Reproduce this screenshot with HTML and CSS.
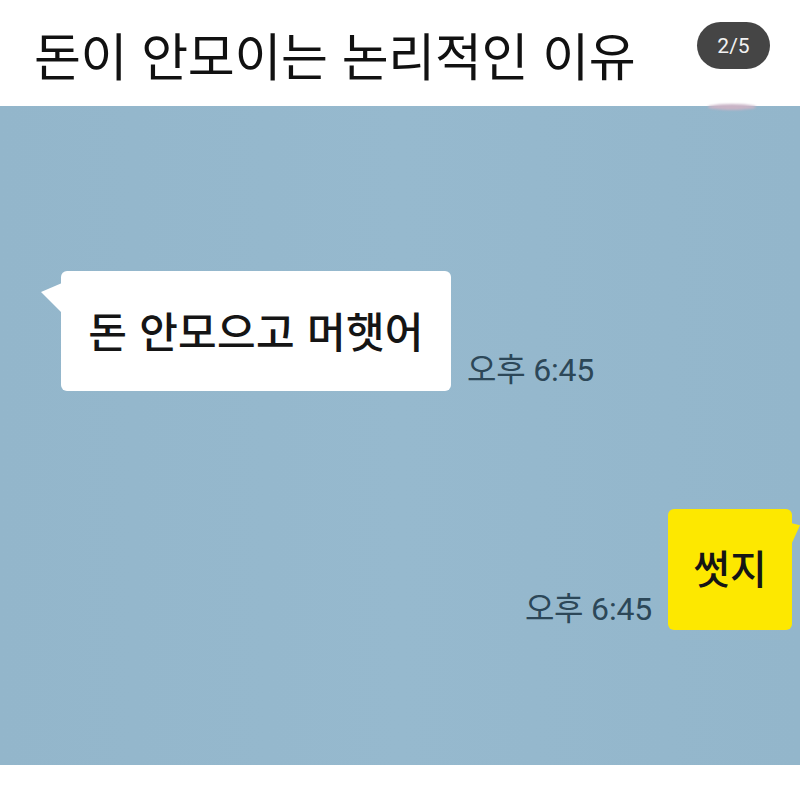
FILE: index.html
```html
<!DOCTYPE html>
<html lang="ko">
<head>
  <meta charset="UTF-8">
  <meta name="viewport" content="width=device-width, initial-scale=1.0">
  <title>돈이 안모이는 논리적인 이유</title>
  <link rel="stylesheet" href="styles.css">
</head>
<body>
  <div id="page">
    <div id="header">
      <h1 id="title">돈이 안모이는 논리적인 이유</h1>
      <div id="counter">2/5</div>
    </div>

    <div id="chat">
      <div class="row row-in">
        <div class="bubble bubble-in">돈 안모으고 머햇어</div>
        <div class="time">오후 6:45</div>
      </div>
      <div class="row row-out">
        <div class="time">오후 6:45</div>
        <div class="bubble bubble-out">썻지</div>
      </div>
    </div>

    <div id="footer"></div>
  </div>
</body>
</html>
```

FILE: styles.css
```css
body, html {
  margin: 0;
  padding: 0;
  width: 100%;
  height: 100%;
  overflow: hidden;
  background: #ffffff;
  font-family: "Noto Sans CJK KR", "Noto Sans", sans-serif;
}

#page {
  width: 800px;
  height: 788px;
  display: flex;
  flex-direction: column;
}

#header {
  height: 106px;
  position: relative;
  display: flex;
  align-items: center;
  padding-left: 34px;
  background: #ffffff;
}

#title {
  margin: 0;
  padding-top: 2px;
  font-size: 51px;
  font-weight: 400;
  letter-spacing: -0.3px;
  color: #111111;
}

#counter {
  position: absolute;
  top: 22px;
  right: 30px;
  width: 73px;
  height: 47px;
  border-radius: 24px;
  background: #454545;
  color: #f2f2f2;
  font-family: "Roboto", "Liberation Sans", sans-serif;
  font-size: 21px;
  display: flex;
  align-items: center;
  justify-content: center;
}

#chat {
  height: 659px;
  position: relative;
  background: linear-gradient(90deg, #93b6cb, #96b9ce 50%, #93b6cb);
  display: flex;
  flex-direction: column;
}

/* little pink smudge peeking from behind the header */
#chat::before {
  content: "";
  position: absolute;
  top: -2px;
  left: 708px;
  width: 48px;
  height: 6px;
  border-radius: 50%;
  background: #c9b4c6;
  filter: blur(1px);
}

.row {
  display: flex;
  align-items: flex-end;
  gap: 16px;
}

.row-in {
  margin-top: 165px;
  padding-left: 61px;
}

.row-out {
  margin-top: 118px;
  justify-content: flex-end;
  padding-right: 8px;
}

.bubble {
  position: relative;
  border-radius: 6px;
  display: flex;
  align-items: center;
  justify-content: center;
  color: #151515;
  font-weight: 500;
}

.bubble::after {
  content: "";
  position: absolute;
}

.bubble-in {
  width: 390px;
  height: 120px;
  background: #ffffff;
  font-size: 42px;
  letter-spacing: 0.3px;
  box-sizing: border-box;
  padding-bottom: 4px;
}

.bubble-in::after {
  left: -20px;
  top: 12px;
  width: 21px;
  height: 30px;
  background: #ffffff;
  clip-path: polygon(0 30%, 100% 0, 100% 100%);
}

.bubble-out {
  width: 124px;
  height: 121px;
  background: #fde800;
  font-size: 40px;
  padding-bottom: 6px;
  box-sizing: border-box;
}

.bubble-out::after {
  right: -8px;
  top: 14px;
  width: 9px;
  height: 22px;
  background: #fde800;
  clip-path: polygon(0 0, 100% 10%, 0 100%);
}

.time {
  font-family: "Roboto", "Noto Sans CJK KR", sans-serif;
  font-size: 32px;
  font-weight: 400;
  color: #2c4758;
  line-height: 1;
  margin-bottom: 5px;
  letter-spacing: -0.2px;
}

#footer {
  flex: 1;
  background: #ffffff;
}
```
